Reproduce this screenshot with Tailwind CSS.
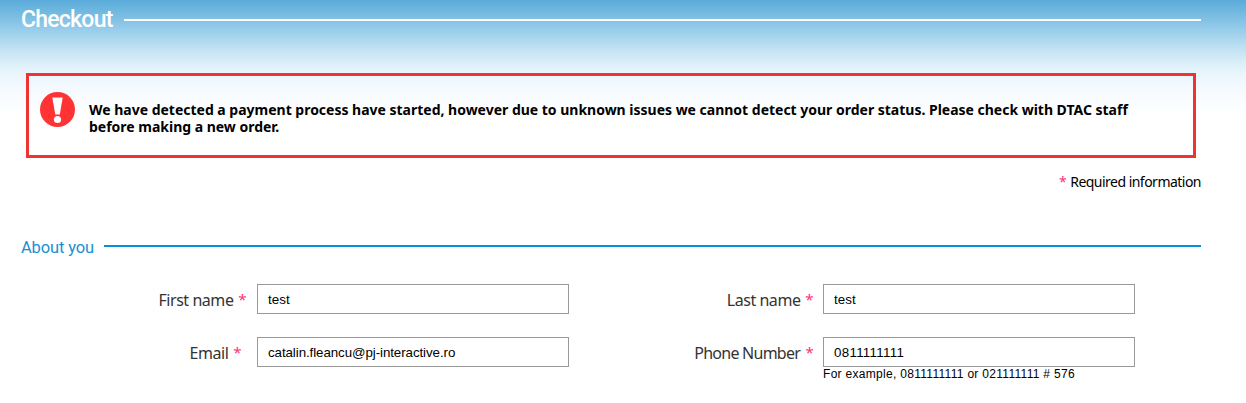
<!DOCTYPE html>
<html lang="en">
<head>
<meta charset="utf-8">
<title>Checkout</title>
<script src="https://cdn.jsdelivr.net/npm/@tailwindcss/browser@4"></script>
</head>
<body class="h-[403px] overflow-hidden bg-white bg-[linear-gradient(to_bottom,#5aabda_0px,#76bbe1_14px,#98cdeb_30px,#bbdff1_46px,#d6ecf7_60px,#e8f5fb_72px,#f1f8fe_84px,#f9fcff_98px,#ffffff_118px)] font-['Noto_Sans',sans-serif] text-black">
<main class="flow-root pl-[21px] pr-[45px]">
  <header class="flex h-10 items-center">
    <h1 class="w-[103px] whitespace-nowrap pb-px font-['Roboto',sans-serif] text-[23px] font-medium leading-[38px] tracking-[-0.75px] text-white">Checkout</h1>
    <div class="h-0.5 flex-1 bg-white"></div>
  </header>
  <section class="mx-[5px] mt-[33px] flex h-[85px] border-3 border-[#ee3333] pl-[11px] pt-4">
    <svg class="size-[35px] shrink-0" viewBox="0 0 35 35"><circle cx="17.5" cy="17.5" r="17.5" fill="#ff3333"/><path d="M12.3 5.5H22.7L19.8 22.5H15.3Z" fill="#fff"/><circle cx="17.5" cy="27.5" r="3.6" fill="#fff"/></svg>
    <p class="ml-[14px] mt-[9px] whitespace-nowrap text-[14px] font-bold leading-[17px] tracking-[-0.01px]">We have detected a payment process have started, however due to unknown issues we cannot detect your order status. Please check with DTAC staff<br>before making a new order.</p>
  </section>
  <p class="mt-3.5 text-right text-[14px] leading-5 tracking-[-0.52px]"><span class="mr-px text-[#ff3377]">*</span> Required information</p>
  <div class="mt-[44px] flex h-5 items-center">
    <h2 class="w-[83px] whitespace-nowrap pt-[3px] font-['Roboto',sans-serif] text-[16.5px] leading-5 tracking-[-0.15px] text-[#1a8fd0]">About you</h2>
    <div class="h-0.5 flex-1 bg-[#0590d4]"></div>
  </div>
  <form class="mt-7 grid grid-cols-[236px_312px_254px_312px] gap-y-[23px]">
    <label class="h-[30px] pr-[11px] text-right text-[16px] leading-8 tracking-[-0.45px] text-[#333]">First name <span class="ml-px align-[1px] text-[15px] leading-none text-[#ff3377]">*</span></label>
    <div class="h-[30px] border border-[#999] bg-white px-2.5 font-['Liberation_Sans',sans-serif] text-[13.33px] leading-[29px] tracking-[0.1px]">test</div>
    <label class="h-[30px] pr-[10px] text-right text-[16px] leading-8 tracking-[-0.45px] text-[#333]">Last name <span class="ml-px align-[1px] text-[15px] leading-none text-[#ff3377]">*</span></label>
    <div class="h-[30px] border border-[#999] bg-white px-2.5 font-['Liberation_Sans',sans-serif] text-[13.33px] leading-[29px] tracking-[0.1px]">test</div>
    <label class="h-[30px] pr-[16px] text-right text-[16px] leading-8 tracking-[-0.45px] text-[#333]">Email <span class="ml-px align-[1px] text-[15px] leading-none text-[#ff3377]">*</span></label>
    <div class="h-[30px] border border-[#999] bg-white px-2.5 font-['Liberation_Sans',sans-serif] text-[13.33px] leading-[29px] tracking-[-0.08px]">catalin.fleancu@pj-interactive.ro</div>
    <label class="h-[30px] pr-[10px] text-right text-[16px] leading-8 tracking-[-0.75px] text-[#333]">Phone Number <span class="ml-[2px] align-[1px] text-[15px] leading-none text-[#ff3377]">*</span></label>
    <div class="font-['Liberation_Sans',sans-serif]">
      <div class="h-[30px] border border-[#999] bg-white px-2.5 text-[13.33px] leading-[29px] tracking-[0.3px]">0811111111</div>
      <p class="whitespace-nowrap text-[12px] leading-[14px] tracking-[0.3px]">For example, 0811111111 or 021111111 # 576</p>
    </div>
  </form>
</main>
</body>
</html>
